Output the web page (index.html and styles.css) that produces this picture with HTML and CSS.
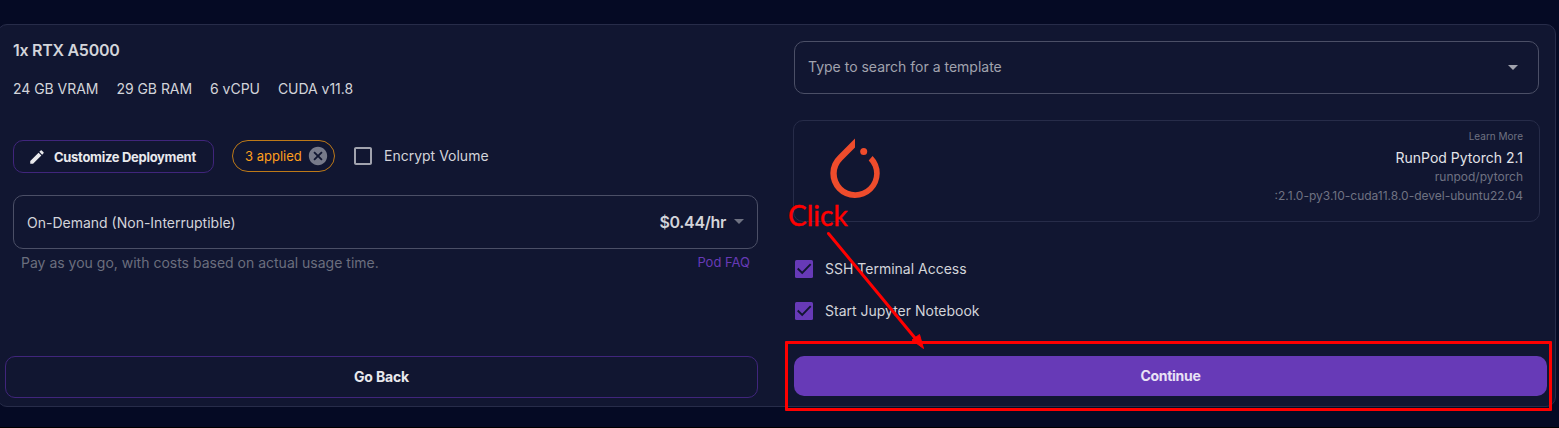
FILE: index.html
```html
<!DOCTYPE html>
<html lang="en">
<head>
<meta charset="utf-8">
<title>Deploy Pod</title>
<link rel="stylesheet" href="styles.css">
</head>
<body>
<main class="card">
  <div class="columns">
    <section class="column">
      <h1 class="gpu-name"><span>1x RTX A5000</span></h1>
      <div class="specs"><span>24 GB VRAM</span><span>29 GB RAM</span><span>6 vCPU</span><span>CUDA v11.8</span></div>
      <div class="options">
        <button class="customize">
          <svg width="18" height="18" viewBox="0 0 24 24" fill="currentColor"><path d="M3 17.25V21h3.75L17.81 9.94l-3.75-3.75L3 17.25zM20.71 7.04a1 1 0 0 0 0-1.41l-2.34-2.34a1 1 0 0 0-1.41 0l-1.83 1.83 3.75 3.75 1.83-1.83z"/></svg>
          <span>Customize Deployment</span>
        </button>
        <div class="chip"><span>3 applied</span>
          <svg width="22" height="22" viewBox="0 0 24 24" fill="currentColor"><path d="M12 2C6.47 2 2 6.47 2 12s4.47 10 10 10 10-4.47 10-10S17.53 2 12 2zm5 13.59L15.59 17 12 13.41 8.41 17 7 15.59 10.59 12 7 8.41 8.41 7 12 10.59 15.59 7 17 8.41 13.41 12 17 15.59z"/></svg>
        </div>
        <label class="check encrypt">
          <svg class="box-empty" width="24" height="24" viewBox="0 0 24 24" fill="currentColor"><path d="M19 5v14H5V5h14m0-2H5c-1.1 0-2 .9-2 2v14c0 1.1.9 2 2 2h14c1.1 0 2-.9 2-2V5c0-1.100-.9-2-2-2z"/></svg>
          <span>Encrypt Volume</span>
        </label>
      </div>
      <div class="field pricing">
        <span class="plan">On-Demand (Non-Interruptible)</span>
        <span class="price">$0.44/hr</span>
        <svg class="caret dim" width="10" height="5" viewBox="0 0 10 5" fill="currentColor"><path d="M0 0h10L5 5z"/></svg>
      </div>
      <div class="help"><span class="hint">Pay as you go, with costs based on actual usage time.</span><a class="faq">Pod FAQ</a></div>
    </section>
    <section class="column">
      <div class="field search">
        <span class="placeholder">Type to search for a template</span>
        <svg class="caret" width="10" height="5" viewBox="0 0 10 5" fill="currentColor"><path d="M0 0h10L5 5z"/></svg>
      </div>
      <div class="template">
        <svg class="logo" width="50" height="61" viewBox="0 0 50 61"><path d="M25 .5V9.500L12.300 22.200A18.700 18.700 0 1 0 38.700 22.400L42.600 18A24.700 24.700 0 1 1 8.100 17.400Z" fill="#ee4c2c"/><circle cx="33.700" cy="13.600" r="3.500" fill="#ee4c2c"/></svg>
        <div class="template-info">
          <span class="learn">Learn More</span>
          <span class="template-name">RunPod Pytorch 2.1</span>
          <span class="image">runpod/pytorch</span>
          <span class="tag">:2.1.0-py3.10-cuda11.8.0-devel-ubuntu22.04</span>
        </div>
      </div>
      <div class="checks">
        <label class="check"><svg class="box-on" width="24" height="24" viewBox="0 0 24 24"><rect x="3" y="3" width="18" height="18" rx="1.500" fill="currentColor"/><path class="mark" d="M5.700 11.500l4.500 4.500 8.500-8.800"/></svg><span class="ssh">SSH Terminal Access</span></label>
        <label class="check"><svg class="box-on" width="24" height="24" viewBox="0 0 24 24"><rect x="3" y="3" width="18" height="18" rx="1.500" fill="currentColor"/><path class="mark" d="M5.700 11.500l4.500 4.500 8.500-8.800"/></svg><span class="jupyter">Start Jupyter Notebook</span></label>
      </div>
    </section>
  </div>
  <div class="actions">
    <button class="back">Go Back</button>
    <button class="continue">Continue</button>
  </div>
</main>
<div class="highlight"></div>
<span class="callout">Click</span>
<svg class="arrow" width="100" height="122" viewBox="0 0 100 122"><path d="M3.500 3.500L90 108" stroke="#f00" stroke-width="3" stroke-linecap="round"/><path d="M98.500 118.500L87 110 94.500 104.500z" fill="#f00" stroke="#f00"/></svg>
</body>
</html>
```
FILE: styles.css
```css
* { box-sizing: border-box; }
body {
  margin: 0;
  height: 428px;
  padding-top: 24px;
  overflow: hidden;
  background: #050a24;
  border-bottom: 1px solid #000;
  color: #d3d4da;
  font-family: Inter, "Liberation Sans", sans-serif;
  font-size: 14px;
  line-height: 20px;
}
svg { display: block; flex: none; }
span, a { white-space: nowrap; }
button { font: inherit; padding: 0; background: none; }
.card {
  width: 1559px;
  height: 383px;
  margin-left: -3px;
  padding: 16px 8px 0 7px;
  border: 1px solid #272c49;
  border-radius: 10px;
  background: #111631;
}
.columns {
  display: grid;
  grid-template-columns: 745px 745px;
  gap: 36px;
  height: 315px;
  padding-left: 8px;
}
.column { display: flex; flex-direction: column; }
.gpu-name { margin: 0; font-size: 16px; line-height: 18px; font-weight: 600; letter-spacing: -0.28px; }
.specs { display: flex; gap: 18px; margin-top: 20px; letter-spacing: -0.04px; }
.options { display: flex; align-items: center; height: 33px; margin-top: 41px; }
.customize {
  display: flex;
  align-items: center;
  width: 201px;
  height: 33px;
  padding-left: 14px;
  gap: 8px;
  border: 1px solid #40257c;
  border-radius: 10px;
  color: #e9e9ed;
  font-size: 13px;
  font-weight: 700;
  letter-spacing: -0.3px;
}
.chip {
  display: flex;
  align-items: center;
  align-self: flex-start;
  width: 103px;
  height: 32px;
  margin-left: 18px;
  padding-left: 12px;
  gap: 5px;
  border: 1px solid #bd7918;
  border-radius: 16px;
  color: #ff9f1c;
  font-size: 13px;
}
.chip svg { color: #777a8a; }
.check { display: flex; align-items: center; gap: 9px; }
.encrypt { margin-left: 16px; height: 32px; align-self: flex-start; }
.box-empty { color: #a1a3ae; }
.box-on { color: #673ab7; }
.mark { fill: none; stroke: #111631; stroke-width: 1.900; }
.field {
  display: flex;
  align-items: center;
  height: 54px;
  padding: 0 13px;
  border: 1px solid #4b4f66;
  border-radius: 10px;
}
.pricing { margin-top: 22px; }
.plan { padding-top: 2px; }
.price { margin-left: auto; font-size: 16px; font-weight: 600; letter-spacing: -0.33px; }
.caret { margin-left: 8px; color: #a1a3ae; }
.dim { color: #6f7282; margin-top: -2px; }
.help { display: flex; justify-content: space-between; padding: 0 8px; margin-top: 4px; color: #6b6e7e; }
.faq { color: #673ab7; font-size: 13px; line-height: 18px; }
.search { height: 53px; padding-right: 20px; }
.placeholder { color: #a1a3ae; padding-bottom: 1px; }
.search .caret { margin-left: auto; }
.template {
  display: flex;
  justify-content: space-between;
  height: 102px;
  margin: 26px -1px 0;
  padding: 6px 16px 0 36px;
  border: 1px solid #272c49;
  border-radius: 10px;
}
.logo { margin-top: 11px; }
.template-info { display: flex; flex-direction: column; align-items: flex-end; color: #6f7282; font-size: 12px; line-height: 19px; }
.learn { font-size: 10px; line-height: 18px; }
.template-name { font-size: 14px; line-height: 20px; padding-top: 3px; margin-bottom: -1px; color: #e3e4e9; }
.checks { display: flex; flex-direction: column; gap: 18px; margin: 35px 0 0 -2px; }
.actions { display: grid; grid-template-columns: 753px 753px; gap: 36px; }
.back, .continue { height: 42px; border: 1px solid #40257c; border-radius: 10px; color: #e9e9ed; font-weight: 700; letter-spacing: -0.15px; }
.continue { height: 40px; border: 0; background: #673ab7; color: #e9e2f5; letter-spacing: -0.3px; }
.highlight { position: absolute; left: 785px; top: 341px; width: 767px; height: 70px; border: 3px solid #f00; border-radius: 1px; }
.callout { position: absolute; left: 788px; top: 199px; color: #f00; font: 28px/32px Lato, "Open Sans", sans-serif; -webkit-text-stroke: 0.4px #f00; }
.arrow { position: absolute; left: 825px; top: 230px; }
```
